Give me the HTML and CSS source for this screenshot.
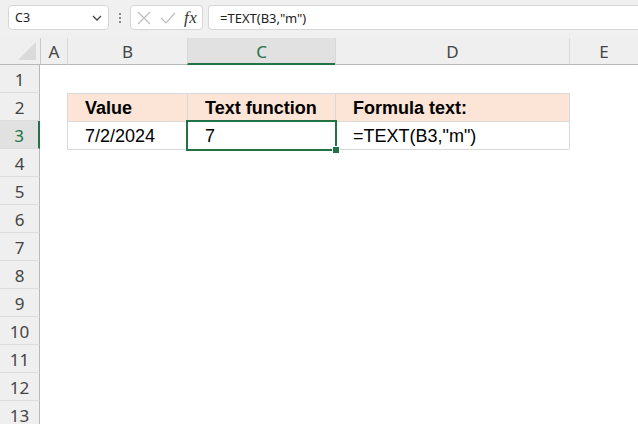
FILE: index.html
```html
<!DOCTYPE html>
<html>
<head>
<meta charset="utf-8">
<link rel="stylesheet" href="styles.css">
</head>
<body>
<div class="toolbar">
  <div class="namebox">
    <span class="name">C3</span>
    <svg class="chev" width="10" height="6" viewBox="0 0 10 6"><path d="M1 1 L5 5 L9 1" fill="none" stroke="#444" stroke-width="1.3"/></svg>
  </div>
  <div class="dots"><i></i><i></i><i></i></div>
  <div class="fxbox">
    <svg class="ico" width="14" height="14" viewBox="0 0 14 14"><path d="M1 1 L13 13 M13 1 L1 13" stroke="#bdbdbd" stroke-width="1.2" fill="none"/></svg>
    <svg class="ico" width="16" height="14" viewBox="0 0 16 14"><path d="M1 7 L6 12 L15 2" stroke="#bdbdbd" stroke-width="1.2" fill="none"/></svg>
    <span class="fx">fx</span>
  </div>
  <div class="formula">=TEXT(B3,"m")</div>
</div>
<div class="sheet">
  <div class="hd corner"><span class="tri"></span></div>
  <div class="hd col first">A</div>
  <div class="hd col">B</div>
  <div class="hd col sel">C</div>
  <div class="hd col">D</div>
  <div class="hd col">E</div>

  <div class="rh">1</div><div></div><div></div><div></div><div></div><div></div>

  <div class="rh">2</div><div></div>
  <div class="c th tl">Value</div>
  <div class="c th tl">Text function</div>
  <div class="c th tl">Formula text:</div>
  <div class="tr"></div>

  <div class="rh sel">3</div><div></div>
  <div class="c tl">7/2/2024</div>
  <div class="c tl active">7<span class="selbox"><span class="handle"></span></span></div>
  <div class="c tl">=TEXT(B3,"m")</div>
  <div class="tr"></div>

  <div class="rh">4</div><div></div><div class="tb"></div><div class="tb"></div><div class="tb"></div><div></div>
  <div class="rh">5</div><div></div><div></div><div></div><div></div><div></div>
  <div class="rh">6</div><div></div><div></div><div></div><div></div><div></div>
  <div class="rh">7</div><div></div><div></div><div></div><div></div><div></div>
  <div class="rh">8</div><div></div><div></div><div></div><div></div><div></div>
  <div class="rh">9</div><div></div><div></div><div></div><div></div><div></div>
  <div class="rh">10</div><div></div><div></div><div></div><div></div><div></div>
  <div class="rh">11</div><div></div><div></div><div></div><div></div><div></div>
  <div class="rh">12</div><div></div><div></div><div></div><div></div><div></div>
  <div class="rh">13</div><div></div><div></div><div></div><div></div><div></div>
</div>
</body>
</html>
```
FILE: styles.css
```css
html, body {
  margin: 0;
  padding: 0;
  background: #ffffff;
  overflow: hidden;
}
body {
  width: 638px;
  height: 424px;
  font-family: "Liberation Sans", Arial, sans-serif;
}
.toolbar {
  height: 38px;
  box-sizing: border-box;
  background: #f0f0f0;
  display: flex;
  align-items: flex-start;
  padding: 5px 0 0 8px;
}
.namebox {
  width: 101px;
  height: 25px;
  box-sizing: border-box;
  background: #fff;
  border: 1px solid #d6d6d6;
  border-radius: 4px;
  display: flex;
  align-items: center;
  justify-content: space-between;
  padding: 0 6px 0 6px;
  font-family: "Noto Sans", sans-serif;
  font-size: 12.5px;
  color: #222;
}
.chev { margin-top: 1px; }
.dots {
  width: 21px;
  height: 25px;
  display: flex;
  flex-direction: column;
  align-items: center;
  justify-content: center;
  gap: 2px;
}
.dots i {
  display: block;
  width: 2px;
  height: 2px;
  background: #8a8a8a;
}
.fxbox {
  width: 73px;
  height: 25px;
  box-sizing: border-box;
  background: #fff;
  border: 1px solid #d6d6d6;
  border-radius: 4px;
  display: flex;
  align-items: center;
  padding-left: 6px;
  gap: 9px;
}
.fx {
  font-family: "Liberation Serif", "Times New Roman", serif;
  font-style: italic;
  font-size: 17px;
  color: #333;
  margin-left: -1px;
  letter-spacing: 0.5px;
}
.formula {
  flex: 1;
  margin-left: 5px;
  height: 25px;
  box-sizing: border-box;
  background: #fff;
  border: 1px solid #d6d6d6;
  border-right: none;
  border-radius: 4px 0 0 4px;
  display: flex;
  align-items: center;
  padding-left: 11px;
  font-family: "Noto Sans", sans-serif;
  font-size: 13px;
  color: #222;
}
.sheet {
  display: grid;
  grid-template-columns: 40px 27px 120px 148px 234px 1fr;
  grid-template-rows: 27px repeat(13, 28px);
}
.sheet > div { box-sizing: border-box; }
.hd {
  background: #efefef;
  border-bottom: 1px solid #b8b8b8;
  display: flex;
  align-items: center;
  justify-content: center;
  font-family: "Noto Sans", sans-serif;
  font-size: 17px;
  color: #444;
}
.col { border-left: 1px solid #d8d8d8; }
.col.first { border-left: 1px solid #c8c8c8; }
.hd.sel {
  background: #e1e1e1;
  color: #217346;
  border-bottom: 2px solid #217346;
  padding-top: 1px;
}
.corner {
  position: relative;
  border-right: none;
}
.tri {
  position: absolute;
  right: 4px;
  bottom: 4px;
  width: 0;
  height: 0;
  border-left: 18px solid transparent;
  border-bottom: 18px solid #dadada;
}
.rh {
  background: #efefef;
  border-right: 1px solid #b8b8b8;
  border-bottom: 1px solid #dcdcdc;
  display: flex;
  align-items: center;
  justify-content: center;
  font-family: "Noto Sans", sans-serif;
  font-size: 17px;
  color: #444;
  padding-top: 1px;
}
.rh.sel {
  background: #e1e1e1;
  color: #217346;
  border-right: 2px solid #217346;
}
.c {
  display: flex;
  align-items: center;
  padding-left: 17px;
  padding-top: 1px;
  font-size: 18px;
  color: #000;
  white-space: nowrap;
}
.th {
  background: #fce4d6;
  font-weight: bold;
}
.tl {
  border-left: 1px solid #d9d9d9;
  border-top: 1px solid #d9d9d9;
}
.tr { border-left: 1px solid #d9d9d9; }
.tb { border-top: 1px solid #d9d9d9; }
.active { position: relative; }
.selbox {
  position: absolute;
  left: -2px;
  top: -2px;
  width: 151px;
  height: 31px;
  box-sizing: border-box;
  border: 2px solid #217346;
}
.handle {
  position: absolute;
  right: -5px;
  bottom: -5px;
  width: 6px;
  height: 6px;
  background: #217346;
  border: 1px solid #fff;
}
```
